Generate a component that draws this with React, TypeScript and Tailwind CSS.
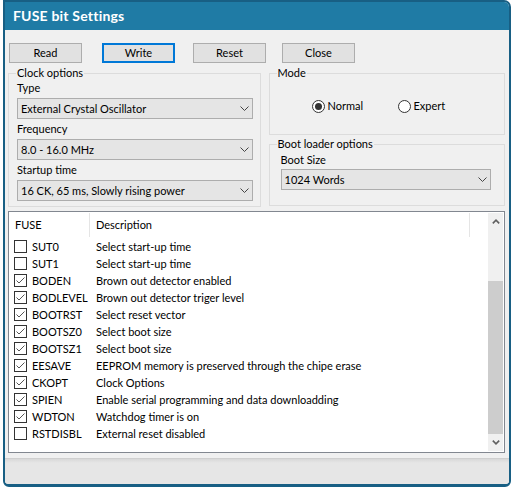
import type { ReactNode } from "react";

const fuses = [
  { name: "SUT0", desc: "Select start-up time", on: false },
  { name: "SUT1", desc: "Select start-up time", on: false },
  { name: "BODEN", desc: "Brown out detector enabled", on: true },
  { name: "BODLEVEL", desc: "Brown out detector triger level", on: true },
  { name: "BOOTRST", desc: "Select reset vector", on: true },
  { name: "BOOTSZ0", desc: "Select boot size", on: true },
  { name: "BOOTSZ1", desc: "Select boot size", on: true },
  { name: "EESAVE", desc: "EEPROM memory is preserved through the chipe erase", on: true },
  { name: "CKOPT", desc: "Clock Options", on: true },
  { name: "SPIEN", desc: "Enable serial programming and data downloadding", on: true },
  { name: "WDTON", desc: "Watchdog timer is on", on: true },
  { name: "RSTDISBL", desc: "External reset disabled", on: false },
];

const Chevron = () => (
  <svg width="9" height="5" viewBox="0 0 9 5" fill="none">
    <path d="M0.5 0.5L4.5 4.5L8.5 0.5" stroke="#444" />
  </svg>
);

const Select = ({ value, className = "" }: { value: string; className?: string }) => (
  <div
    className={`flex items-center justify-between h-[21px] border border-[#adadad] bg-[#e5e5e5] pl-[3px] pr-[3px] ${className}`}
  >
    <span>{value}</span>
    <Chevron />
  </div>
);

const Group = ({
  title,
  className = "",
  children,
}: {
  title: string;
  className?: string;
  children?: ReactNode;
}) => (
  <div className={`relative border border-[#dcdcdc] ${className}`}>
    <span className="absolute -top-[9px] left-[7px] bg-[#f0f0f0] px-[1px] leading-[16px]">
      {title}
    </span>
    {children}
  </div>
);

const Button = ({ label, focused = false, className = "" }: { label: string; focused?: boolean; className?: string }) => (
  <div
    className={`w-[73px] h-[20px] flex items-center justify-center bg-[#e1e1e1] ${
      focused ? "border-2 border-[#0078d7]" : "border border-[#adadad]"
    } ${className}`}
  >
    {label}
  </div>
);

const Radio = ({ label, on, className = "" }: { label: string; on: boolean; className?: string }) => (
  <div className={`flex items-center ${className}`}>
    <span className="w-[13px] h-[13px] rounded-full border border-[#333] bg-white flex items-center justify-center">
      {on && <span className="w-[7px] h-[7px] rounded-full bg-[#333]" />}
    </span>
    <span className="ml-[3px]">{label}</span>
  </div>
);

const Check = ({ on }: { on: boolean }) => (
  <span className="w-[13px] h-[13px] shrink-0 border border-[#333] bg-white flex items-center justify-center">
    {on && (
      <svg width="11" height="11" viewBox="0 0 11 11" fill="none">
        <path d="M1.5 5.5L4 8L9.5 2.5" stroke="#555" />
      </svg>
    )}
  </span>
);

const Arrow = ({ up }: { up: boolean }) => (
  <svg width="8" height="5" viewBox="0 0 8 5" fill="none">
    <path d={up ? "M0.8 4.4L4 1.2L7.2 4.4" : "M0.8 0.6L4 3.8L7.2 0.6"} stroke="#606060" strokeWidth="1.6" />
  </svg>
);

export default function App() {
  return (
    <div className="w-[513px] h-[490px] bg-white pl-[3px] text-[11px] leading-[16px] text-black [font-family:Lato,sans-serif]">
      <div className="w-[508px] h-[487px] flex flex-col border-2 border-b-[3px] border-[#185f84] rounded-tr-[7px] rounded-b-[6px] overflow-hidden bg-[#f0f0f0]">
        <div className="h-[28px] shrink-0 bg-[#1f7ba5] flex items-center pl-[8px] text-white text-[14px] tracking-[0.2px] font-bold">
          FUSE bit Settings
        </div>

        <div className="flex flex-col pl-[3px] pr-[4px]">
          <div className="flex mt-[13px] pl-[1px]">
            <Button label="Read" />
            <Button label="Write" focused className="ml-[20px]" />
            <Button label="Reset" className="ml-[18px]" />
            <Button label="Close" className="ml-[16px]" />
          </div>

          <div className="flex mt-[10px]">
            <Group title="Clock options" className="w-[253px] h-[134px] pt-[6px] pl-[8px] pr-[7px]">
              <div className="h-[16px]">Type</div>
              <Select value="External Crystal Oscillator" className="mt-[2px]" />
              <div className="h-[16px] mt-[2px]">Frequency</div>
              <Select value="8.0 - 16.0 MHz" className="mt-[2px]" />
              <div className="h-[16px] mt-[2px]">Startup time</div>
              <Select value="16 CK, 65 ms, Slowly rising power" className="mt-[2px]" />
            </Group>

            <div className="flex flex-col ml-[8px] w-[237px]">
              <Group title="Mode" className="h-[62px] pt-[24px] pl-[42px]">
                <div className="flex">
                  <Radio label="Normal" on className="w-[86px]" />
                  <Radio label="Expert" on={false} />
                </div>
              </Group>
              <Group title="Boot loader options" className="h-[62px] mt-[9px] pt-[7px] pl-[11px] pr-[13px]">
                <div className="h-[16px]">Boot Size</div>
                <Select value="1024 Words" className="mt-[1px]" />
              </Group>
            </div>
          </div>

          <div className="mt-[4px] h-[242px] w-[497px] border border-[#828790] bg-white flex">
            <div className="flex-1 flex flex-col">
              <div className="h-[26px] flex shrink-0">
                <div className="w-[80px] pl-[6px] flex items-center">FUSE</div>
                <div className="w-px h-[24px] mt-[1px] bg-[#e5e5e5]" />
                <div className="w-[379px] pl-[6px] flex items-center">Description</div>
                <div className="w-px h-[24px] mt-[1px] bg-[#e5e5e5]" />
              </div>
              {fuses.map((f) => (
                <div key={f.name} className="h-[17px] flex items-center">
                  <div className="w-[81px] flex items-center pl-[5px]">
                    <Check on={f.on} />
                    <span className="ml-[5px]">{f.name}</span>
                  </div>
                  <span className="pl-[6px] whitespace-nowrap">{f.desc}</span>
                </div>
              ))}
            </div>
            <div className="w-[15px] mr-[1px] my-[1px] flex flex-col bg-[#f0f0f0]">
              <div className="h-[17px] flex items-center justify-center">
                <Arrow up />
              </div>
              <div className="h-[51px]" />
              <div className="h-[153px] bg-[#cdcdcd]" />
              <div className="flex-1" />
              <div className="h-[17px] flex items-center justify-center">
                <Arrow up={false} />
              </div>
            </div>
          </div>
        </div>

        <div className="mt-[5px] flex-1 border-t border-[#cfcfcf] bg-[linear-gradient(to_bottom,#d8d8d8,#e6e6e6_4px)]" />
      </div>
    </div>
  );
}
